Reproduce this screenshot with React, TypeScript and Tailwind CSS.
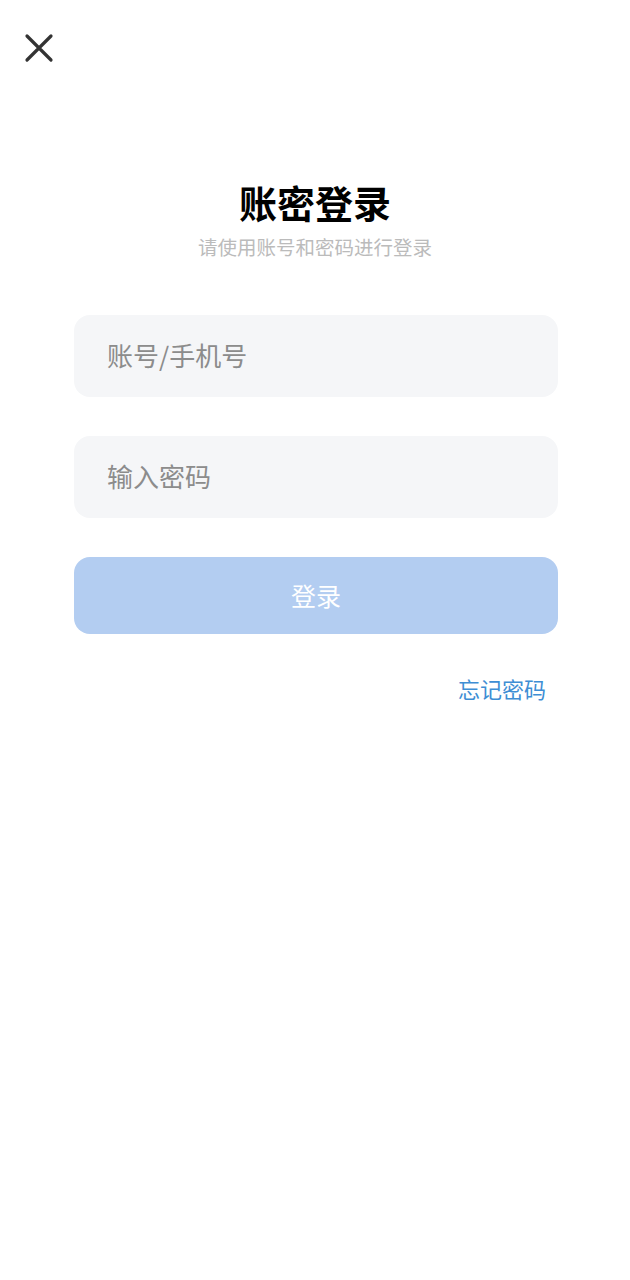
import React from 'react';

const font = { fontFamily: '"Noto Sans CJK SC", "Noto Sans", sans-serif' };

export default function App() {
    return (
        <div className="min-h-screen bg-white flex flex-col" style={font}>
            <div className="pl-[24px] pt-[33px] h-[100px]">
                <button aria-label="Close" className="w-[30px] h-[30px] flex items-center justify-center">
                    <svg width="30" height="30" viewBox="0 0 30 30" fill="none" stroke="#333" strokeWidth="3.2" strokeLinecap="round">
                        <path d="M3 3 L27 27 M27 3 L3 27" />
                    </svg>
                </button>
            </div>

            <div className="flex flex-col items-center mt-[78px]">
                <h1 className="text-[38px] leading-[48px] font-bold text-black">账密登录</h1>
                <p className="text-[19.5px] leading-[26px] text-[#bbbbbb] mt-[8px]">请使用账号和密码进行登录</p>
            </div>

            <div className="pl-[74px] pr-[72px] mt-[55px] flex flex-col">
                <input
                    placeholder="账号/手机号"
                    className="h-[82px] rounded-[16px] bg-[#f5f6f8] px-[33px] pb-[3px] text-[26px] text-[#333] placeholder:text-[#8c8c8c] outline-none"
                />
                <input
                    type="password"
                    placeholder="输入密码"
                    className="h-[82px] mt-[39px] rounded-[16px] bg-[#f5f6f8] px-[33px] pb-[3px] text-[26px] text-[#333] placeholder:text-[#8c8c8c] outline-none"
                />
                <button className="h-[77px] mt-[39px] rounded-[16px] bg-[#b3cdf1] text-white text-[25px]">
                    登录
                </button>
                <div className="flex justify-end pr-[12px] mt-[39px]">
                    <span className="text-[22px] leading-[30px] text-[#3e8ed4]">忘记密码</span>
                </div>
            </div>
        </div>
    );
}
